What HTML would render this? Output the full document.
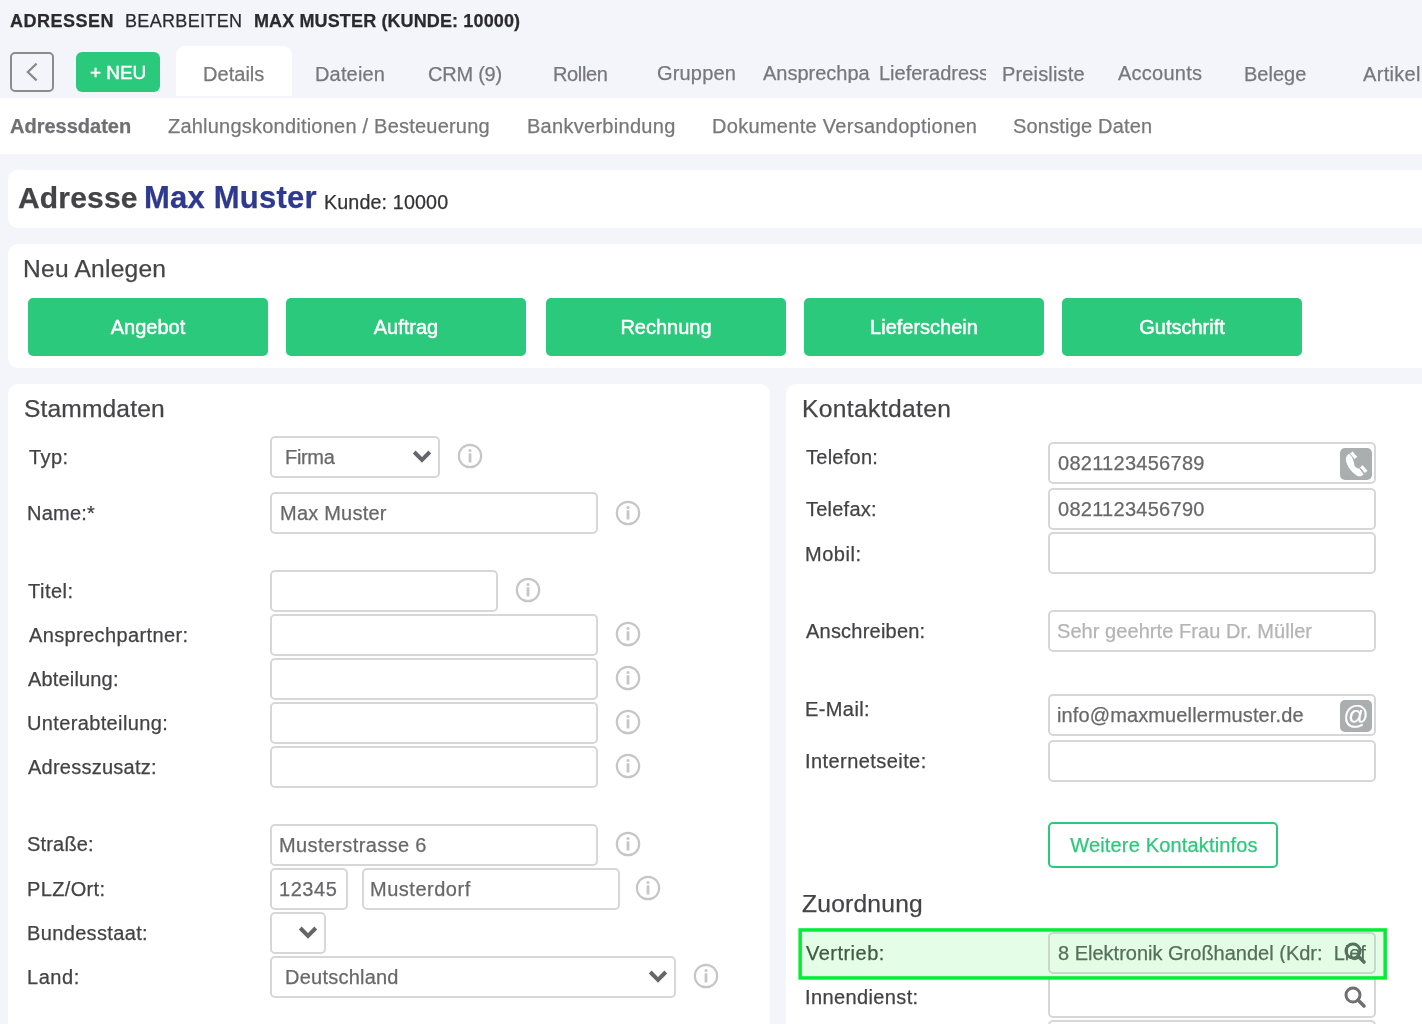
<!DOCTYPE html><html><head><meta charset="utf-8"><style>
html,body{margin:0;padding:0}
body{width:1422px;height:1024px;overflow:hidden;background:#f4f5fa;position:relative;font-family:"Liberation Sans", sans-serif}
.t{position:absolute;line-height:1;white-space:nowrap;will-change:transform;-webkit-text-stroke:0.25px currentColor}
.b{position:absolute}
</style></head><body>
<div class="t" style="left:10.00px;top:11.76px;font-size:18px;color:#2b2b2e;font-weight:700;letter-spacing:0.5px;">ADRESSEN</div>
<div class="t" style="left:125.00px;top:11.76px;font-size:18px;color:#2b2b2e;letter-spacing:0.333px;">BEARBEITEN</div>
<div class="t" style="left:254.00px;top:11.76px;font-size:18px;color:#2b2b2e;font-weight:700;letter-spacing:0.125px;">MAX MUSTER (KUNDE: 10000)</div>
<div class="b" style="left:10px;top:52px;width:44px;height:40px;border:2px solid #8c8c8c;border-radius:5px;box-sizing:border-box"></div>
<svg class="b" style="left:24px;top:62px" width="16" height="20" viewBox="0 0 16 20"><path d="M12.6 1.6 L3.8 10 L12.6 18.4" fill="none" stroke="#8a8a8a" stroke-width="2.2"/></svg>
<div class="b" style="left:76px;top:52px;width:84px;height:40px;background:#2bc97b;border-radius:6px"></div>
<div class="t" style="left:90.10px;top:62.92px;font-size:19px;color:#fff;letter-spacing:-0.05px;-webkit-text-stroke:0.4px #fff;">+ NEU</div>
<div class="b" style="left:176px;top:46px;width:116px;height:50px;background:#fff;border-radius:9px 9px 0 0"></div>
<div class="t" style="left:202.80px;top:64.07px;font-size:20px;color:#77777c;letter-spacing:0.033px;">Details</div>
<div class="t" style="left:314.50px;top:64.07px;font-size:20px;color:#77777c;letter-spacing:0.167px;">Dateien</div>
<div class="t" style="left:427.70px;top:64.07px;font-size:20px;color:#77777c;letter-spacing:-0.233px;">CRM (9)</div>
<div class="t" style="left:552.60px;top:64.07px;font-size:20px;color:#77777c;letter-spacing:-0.36px;">Rollen</div>
<div class="t" style="left:657.00px;top:63.07px;font-size:20px;color:#77777c;letter-spacing:0.167px;">Gruppen</div>
<div class="t" style="left:1002.20px;top:64.07px;font-size:20px;color:#77777c;letter-spacing:0.156px;">Preisliste</div>
<div class="t" style="left:1117.60px;top:63.07px;font-size:20px;color:#77777c;letter-spacing:0.243px;">Accounts</div>
<div class="t" style="left:1244.20px;top:64.07px;font-size:20px;color:#77777c;letter-spacing:0.0px;">Belege</div>
<div class="t" style="left:1362.50px;top:64.07px;font-size:20px;color:#77777c;letter-spacing:0.317px;">Artikel</div>
<div class="t" style="left:763px;top:63.07px;font-size:20px;color:#77777c;width:108px;overflow:hidden">Ansprechpartner</div>
<div class="t" style="left:879px;top:63.07px;font-size:20px;color:#77777c;width:107px;overflow:hidden">Lieferadressen</div>
<div class="b" style="left:0px;top:98px;width:1422px;height:56px;background:#fff"></div>
<div class="t" style="left:10.00px;top:116.07px;font-size:20px;color:#6f6f74;font-weight:700;letter-spacing:0.0px;">Adressdaten</div>
<div class="t" style="left:168.00px;top:116.07px;font-size:20px;color:#77777c;letter-spacing:0.219px;">Zahlungskonditionen / Besteuerung</div>
<div class="t" style="left:526.80px;top:116.07px;font-size:20px;color:#77777c;letter-spacing:0.285px;">Bankverbindung</div>
<div class="t" style="left:712.20px;top:116.07px;font-size:20px;color:#77777c;letter-spacing:0.292px;">Dokumente Versandoptionen</div>
<div class="t" style="left:1013.00px;top:116.07px;font-size:20px;color:#77777c;letter-spacing:0.185px;">Sonstige Daten</div>
<div class="b" style="left:8px;top:170px;width:1430px;height:58px;background:#fff;border-radius:10px"></div>
<div class="t" style="left:17.70px;top:183.20px;font-size:30px;color:#444447;font-weight:700;letter-spacing:0.183px;">Adresse</div>
<div class="t" style="left:144.00px;top:182.36px;font-size:31px;color:#2e3990;font-weight:700;letter-spacing:0.211px;">Max Muster</div>
<div class="t" style="left:323.60px;top:192.92px;font-size:19.7px;color:#333336;letter-spacing:0.136px;">Kunde: 10000</div>
<div class="b" style="left:8px;top:244px;width:1430px;height:124px;background:#fff;border-radius:10px"></div>
<div class="t" style="left:22.70px;top:257.18px;font-size:24.6px;color:#454548;letter-spacing:0.22px;">Neu Anlegen</div>
<div class="b" style="left:28px;top:298px;width:240px;height:58px;background:#2bc97b;border-radius:5px"></div>
<div class="t" style="left:-52.00px;width:400px;text-align:center;top:317.07px;font-size:20px;color:#fff;-webkit-text-stroke:0.45px #fff;">Angebot</div>
<div class="b" style="left:286px;top:298px;width:240px;height:58px;background:#2bc97b;border-radius:5px"></div>
<div class="t" style="left:206.00px;width:400px;text-align:center;top:317.07px;font-size:20px;color:#fff;-webkit-text-stroke:0.45px #fff;">Auftrag</div>
<div class="b" style="left:546px;top:298px;width:240px;height:58px;background:#2bc97b;border-radius:5px"></div>
<div class="t" style="left:466.00px;width:400px;text-align:center;top:317.07px;font-size:20px;color:#fff;-webkit-text-stroke:0.45px #fff;">Rechnung</div>
<div class="b" style="left:804px;top:298px;width:240px;height:58px;background:#2bc97b;border-radius:5px"></div>
<div class="t" style="left:724.00px;width:400px;text-align:center;top:317.07px;font-size:20px;color:#fff;-webkit-text-stroke:0.45px #fff;">Lieferschein</div>
<div class="b" style="left:1062px;top:298px;width:240px;height:58px;background:#2bc97b;border-radius:5px"></div>
<div class="t" style="left:982.00px;width:400px;text-align:center;top:317.07px;font-size:20px;color:#fff;-webkit-text-stroke:0.45px #fff;">Gutschrift</div>
<div class="b" style="left:8px;top:384px;width:762px;height:700px;background:#fff;border-radius:10px"></div>
<div class="b" style="left:786px;top:384px;width:700px;height:700px;background:#fff;border-radius:10px"></div>
<div class="t" style="left:24.20px;top:397.18px;font-size:24.6px;color:#454548;letter-spacing:0.133px;">Stammdaten</div>
<div class="t" style="left:802.00px;top:397.18px;font-size:24.6px;color:#454548;letter-spacing:0.364px;">Kontaktdaten</div>
<div class="t" style="left:28.60px;top:447.07px;font-size:20px;color:#434346;letter-spacing:0.4px;">Typ:</div>
<div class="b" style="left:270px;top:436px;width:170px;height:42px;border:2px solid #d7d7d7;border-radius:5px;background:#fff;box-sizing:border-box;"></div>
<svg class="b" style="left:410px;top:448px" width="24" height="16" viewBox="0 0 24 16"><path d="M4.2 4 L12 11.8 L19.8 4" fill="none" stroke="#66666a" stroke-width="4" stroke-linecap="butt" stroke-linejoin="miter"/></svg>
<div class="t" style="left:27.00px;top:503.07px;font-size:20px;color:#434346;letter-spacing:0.22px;">Name:*</div>
<div class="b" style="left:270px;top:492px;width:328px;height:42px;border:2px solid #d7d7d7;border-radius:5px;background:#fff;box-sizing:border-box;"></div>
<div class="t" style="left:28.20px;top:581.07px;font-size:20px;color:#434346;letter-spacing:0.48px;">Titel:</div>
<div class="b" style="left:270px;top:570px;width:228px;height:42px;border:2px solid #d7d7d7;border-radius:5px;background:#fff;box-sizing:border-box;"></div>
<div class="t" style="left:28.60px;top:625.07px;font-size:20px;color:#434346;letter-spacing:0.373px;">Ansprechpartner:</div>
<div class="b" style="left:270px;top:614px;width:328px;height:42px;border:2px solid #d7d7d7;border-radius:5px;background:#fff;box-sizing:border-box;"></div>
<div class="t" style="left:28.20px;top:669.07px;font-size:20px;color:#434346;letter-spacing:0.167px;">Abteilung:</div>
<div class="b" style="left:270px;top:658px;width:328px;height:42px;border:2px solid #d7d7d7;border-radius:5px;background:#fff;box-sizing:border-box;"></div>
<div class="t" style="left:27.00px;top:713.07px;font-size:20px;color:#434346;letter-spacing:0.364px;">Unterabteilung:</div>
<div class="b" style="left:270px;top:702px;width:328px;height:42px;border:2px solid #d7d7d7;border-radius:5px;background:#fff;box-sizing:border-box;"></div>
<div class="t" style="left:28.00px;top:757.07px;font-size:20px;color:#434346;letter-spacing:0.25px;">Adresszusatz:</div>
<div class="b" style="left:270px;top:746px;width:328px;height:42px;border:2px solid #d7d7d7;border-radius:5px;background:#fff;box-sizing:border-box;"></div>
<div class="t" style="left:27.30px;top:834.07px;font-size:20px;color:#434346;letter-spacing:0.183px;">Straße:</div>
<div class="b" style="left:270px;top:824px;width:328px;height:42px;border:2px solid #d7d7d7;border-radius:5px;background:#fff;box-sizing:border-box;"></div>
<div class="t" style="left:27.00px;top:879.07px;font-size:20px;color:#434346;letter-spacing:0.357px;">PLZ/Ort:</div>
<div class="b" style="left:270px;top:868px;width:78px;height:42px;border:2px solid #d7d7d7;border-radius:5px;background:#fff;box-sizing:border-box;"></div>
<div class="t" style="left:27.00px;top:923.07px;font-size:20px;color:#434346;letter-spacing:0.355px;">Bundesstaat:</div>
<div class="b" style="left:270px;top:912px;width:56px;height:42px;border:2px solid #d7d7d7;border-radius:5px;background:#fff;box-sizing:border-box;"></div>
<svg class="b" style="left:296px;top:924px" width="24" height="16" viewBox="0 0 24 16"><path d="M4.2 4 L12 11.8 L19.8 4" fill="none" stroke="#66666a" stroke-width="4" stroke-linecap="butt" stroke-linejoin="miter"/></svg>
<div class="t" style="left:27.00px;top:967.07px;font-size:20px;color:#434346;letter-spacing:0.55px;">Land:</div>
<div class="b" style="left:270px;top:956px;width:406px;height:42px;border:2px solid #d7d7d7;border-radius:5px;background:#fff;box-sizing:border-box;"></div>
<svg class="b" style="left:646px;top:968px" width="24" height="16" viewBox="0 0 24 16"><path d="M4.2 4 L12 11.8 L19.8 4" fill="none" stroke="#66666a" stroke-width="4" stroke-linecap="butt" stroke-linejoin="miter"/></svg>
<div class="b" style="left:362px;top:868px;width:258px;height:42px;border:2px solid #d7d7d7;border-radius:5px;background:#fff;box-sizing:border-box;"></div>
<div class="t" style="left:285.00px;top:447.07px;font-size:20px;color:#68686b;letter-spacing:-0.325px;">Firma</div>
<div class="t" style="left:279.60px;top:503.07px;font-size:20px;color:#68686b;letter-spacing:0.222px;">Max Muster</div>
<div class="t" style="left:278.80px;top:835.07px;font-size:20px;color:#68686b;letter-spacing:0.371px;">Musterstrasse 6</div>
<div class="t" style="left:278.80px;top:879.07px;font-size:20px;color:#68686b;letter-spacing:0.55px;">12345</div>
<div class="t" style="left:370.20px;top:879.07px;font-size:20px;color:#68686b;letter-spacing:0.511px;">Musterdorf</div>
<div class="t" style="left:284.90px;top:967.07px;font-size:20px;color:#68686b;letter-spacing:0.23px;">Deutschland</div>
<svg class="b" style="left:457px;top:443px" width="26" height="26" viewBox="0 0 26 26"><circle cx="13" cy="13" r="11.2" fill="none" stroke="#c6c6c6" stroke-width="2.2"/><circle cx="13" cy="7.6" r="1.5" fill="#c6c6c6"/><rect x="11.6" y="10.3" width="2.8" height="9.2" fill="#c6c6c6"/></svg>
<svg class="b" style="left:615px;top:500px" width="26" height="26" viewBox="0 0 26 26"><circle cx="13" cy="13" r="11.2" fill="none" stroke="#c6c6c6" stroke-width="2.2"/><circle cx="13" cy="7.6" r="1.5" fill="#c6c6c6"/><rect x="11.6" y="10.3" width="2.8" height="9.2" fill="#c6c6c6"/></svg>
<svg class="b" style="left:515px;top:577px" width="26" height="26" viewBox="0 0 26 26"><circle cx="13" cy="13" r="11.2" fill="none" stroke="#c6c6c6" stroke-width="2.2"/><circle cx="13" cy="7.6" r="1.5" fill="#c6c6c6"/><rect x="11.6" y="10.3" width="2.8" height="9.2" fill="#c6c6c6"/></svg>
<svg class="b" style="left:615px;top:621px" width="26" height="26" viewBox="0 0 26 26"><circle cx="13" cy="13" r="11.2" fill="none" stroke="#c6c6c6" stroke-width="2.2"/><circle cx="13" cy="7.6" r="1.5" fill="#c6c6c6"/><rect x="11.6" y="10.3" width="2.8" height="9.2" fill="#c6c6c6"/></svg>
<svg class="b" style="left:615px;top:665px" width="26" height="26" viewBox="0 0 26 26"><circle cx="13" cy="13" r="11.2" fill="none" stroke="#c6c6c6" stroke-width="2.2"/><circle cx="13" cy="7.6" r="1.5" fill="#c6c6c6"/><rect x="11.6" y="10.3" width="2.8" height="9.2" fill="#c6c6c6"/></svg>
<svg class="b" style="left:615px;top:709px" width="26" height="26" viewBox="0 0 26 26"><circle cx="13" cy="13" r="11.2" fill="none" stroke="#c6c6c6" stroke-width="2.2"/><circle cx="13" cy="7.6" r="1.5" fill="#c6c6c6"/><rect x="11.6" y="10.3" width="2.8" height="9.2" fill="#c6c6c6"/></svg>
<svg class="b" style="left:615px;top:753px" width="26" height="26" viewBox="0 0 26 26"><circle cx="13" cy="13" r="11.2" fill="none" stroke="#c6c6c6" stroke-width="2.2"/><circle cx="13" cy="7.6" r="1.5" fill="#c6c6c6"/><rect x="11.6" y="10.3" width="2.8" height="9.2" fill="#c6c6c6"/></svg>
<svg class="b" style="left:615px;top:831px" width="26" height="26" viewBox="0 0 26 26"><circle cx="13" cy="13" r="11.2" fill="none" stroke="#c6c6c6" stroke-width="2.2"/><circle cx="13" cy="7.6" r="1.5" fill="#c6c6c6"/><rect x="11.6" y="10.3" width="2.8" height="9.2" fill="#c6c6c6"/></svg>
<svg class="b" style="left:635px;top:875px" width="26" height="26" viewBox="0 0 26 26"><circle cx="13" cy="13" r="11.2" fill="none" stroke="#c6c6c6" stroke-width="2.2"/><circle cx="13" cy="7.6" r="1.5" fill="#c6c6c6"/><rect x="11.6" y="10.3" width="2.8" height="9.2" fill="#c6c6c6"/></svg>
<svg class="b" style="left:693px;top:963px" width="26" height="26" viewBox="0 0 26 26"><circle cx="13" cy="13" r="11.2" fill="none" stroke="#c6c6c6" stroke-width="2.2"/><circle cx="13" cy="7.6" r="1.5" fill="#c6c6c6"/><rect x="11.6" y="10.3" width="2.8" height="9.2" fill="#c6c6c6"/></svg>
<div class="t" style="left:806.40px;top:447.07px;font-size:20px;color:#434346;letter-spacing:0.257px;">Telefon:</div>
<div class="b" style="left:1048px;top:442px;width:328px;height:42px;border:2px solid #d7d7d7;border-radius:5px;background:#fff;box-sizing:border-box;"></div>
<div class="t" style="left:806.40px;top:499.07px;font-size:20px;color:#434346;letter-spacing:0.229px;">Telefax:</div>
<div class="b" style="left:1048px;top:488px;width:328px;height:42px;border:2px solid #d7d7d7;border-radius:5px;background:#fff;box-sizing:border-box;"></div>
<div class="t" style="left:805.40px;top:544.07px;font-size:20px;color:#434346;letter-spacing:0.52px;">Mobil:</div>
<div class="b" style="left:1048px;top:532px;width:328px;height:42px;border:2px solid #d7d7d7;border-radius:5px;background:#fff;box-sizing:border-box;"></div>
<div class="t" style="left:806.20px;top:621.07px;font-size:20px;color:#434346;letter-spacing:0.218px;">Anschreiben:</div>
<div class="b" style="left:1048px;top:610px;width:328px;height:42px;border:2px solid #d7d7d7;border-radius:5px;background:#fff;box-sizing:border-box;"></div>
<div class="t" style="left:805.20px;top:699.07px;font-size:20px;color:#434346;letter-spacing:0.4px;">E-Mail:</div>
<div class="b" style="left:1048px;top:694px;width:328px;height:42px;border:2px solid #d7d7d7;border-radius:5px;background:#fff;box-sizing:border-box;"></div>
<div class="t" style="left:805.20px;top:751.07px;font-size:20px;color:#434346;letter-spacing:0.431px;">Internetseite:</div>
<div class="b" style="left:1048px;top:740px;width:328px;height:42px;border:2px solid #d7d7d7;border-radius:5px;background:#fff;box-sizing:border-box;"></div>
<div class="t" style="left:1058.20px;top:453.07px;font-size:20px;color:#68686b;letter-spacing:0.275px;">0821123456789</div>
<div class="t" style="left:1058.20px;top:499.07px;font-size:20px;color:#68686b;letter-spacing:0.275px;">0821123456790</div>
<div class="t" style="left:1057.20px;top:620.57px;font-size:20px;color:#b4b4b6;letter-spacing:0.059px;">Sehr geehrte Frau Dr. Müller</div>
<div class="t" style="left:1057.20px;top:704.57px;font-size:20px;color:#68686b;letter-spacing:0.122px;">info@maxmuellermuster.de</div>
<div class="b" style="left:1340px;top:448px;width:32px;height:32px;background:#abaeaf;border-radius:5px"></div>
<svg class="b" style="left:1340px;top:448px" width="32" height="32" viewBox="0 0 32 32"><path d="M10.8 5.2 C7.2 6.2 5.4 8.8 6 12.8 C7 18.2 11.6 24.2 16.6 27.4 C19 28.9 21.6 28.6 23.6 26.6 L19.4 20.4 C17 20.6 15.2 19.4 14.4 17.2 L13.4 12.6 Z" fill="#fff"/><path d="M9.6 5.6 L12.6 3.1 L17.8 8.8 L14.6 11.6 Z" fill="#fff" stroke="#abaeaf" stroke-width="1" stroke-linejoin="round"/><path d="M19.6 19.4 L22.6 16.7 L28 22.8 L24.8 25.6 Z" fill="#fff" stroke="#abaeaf" stroke-width="1" stroke-linejoin="round"/></svg>
<div class="b" style="left:1340px;top:700px;width:32px;height:32px;background:#abaeaf;border-radius:5px"></div>
<div class="t" style="left:1340.00px;width:32px;text-align:center;top:702.84px;font-size:25px;color:#fff;">@</div>
<div class="b" style="left:1048px;top:822px;width:230px;height:46px;border:2px solid #2bc97b;border-radius:5px;box-sizing:border-box;background:#fff"></div>
<div class="t" style="left:1048.55px;width:230px;text-align:center;top:835.07px;font-size:20px;color:#2bc97b;letter-spacing:0.163px;">Weitere Kontaktinfos</div>
<div class="t" style="left:802.20px;top:892.18px;font-size:24.6px;color:#454548;letter-spacing:0.225px;">Zuordnung</div>
<div class="b" style="left:1048px;top:976px;width:328px;height:42px;border:2px solid #d7d7d7;border-radius:5px;background:#fff;box-sizing:border-box;"></div>
<svg class="b" style="left:796px;top:926px" width="594" height="56"><rect x="4.15" y="3.95" width="585" height="48" fill="#e4fde6" stroke="#00ee35" stroke-width="3.5"/></svg>
<div class="t" style="left:806.20px;top:943.07px;font-size:20px;color:#3f5a45;letter-spacing:0.475px;">Vertrieb:</div>
<div class="b" style="left:1048px;top:932px;width:328px;height:42px;border:2px solid #d7d7d7;border-radius:5px;background:#fff;box-sizing:border-box;background:#e4fbe6;border-color:#c8d8c9"></div>
<div class="t" style="left:1058px;top:943.07px;font-size:20px;color:#55705a;width:308px;overflow:hidden">8 Elektronik Großhandel (Kdr: &nbsp;Lieferant)</div>
<div class="t" style="left:805.00px;top:986.57px;font-size:20px;color:#434346;letter-spacing:0.382px;">Innendienst:</div>
<div class="b" style="left:1048px;top:1020px;width:328px;height:42px;border:2px solid #d7d7d7;border-radius:5px;background:#fff;box-sizing:border-box;"></div>
<svg class="b" style="left:1343px;top:941px" width="24" height="24" viewBox="0 0 24 24"><circle cx="10" cy="10" r="7" fill="none" stroke="#56715b" stroke-width="3"/><path d="M15 15 L21 21" stroke="#56715b" stroke-width="3.6" stroke-linecap="round"/></svg>
<svg class="b" style="left:1343px;top:985px" width="24" height="24" viewBox="0 0 24 24"><circle cx="10" cy="10" r="7" fill="none" stroke="#707070" stroke-width="3"/><path d="M15 15 L21 21" stroke="#707070" stroke-width="3.6" stroke-linecap="round"/></svg>
</body></html>
